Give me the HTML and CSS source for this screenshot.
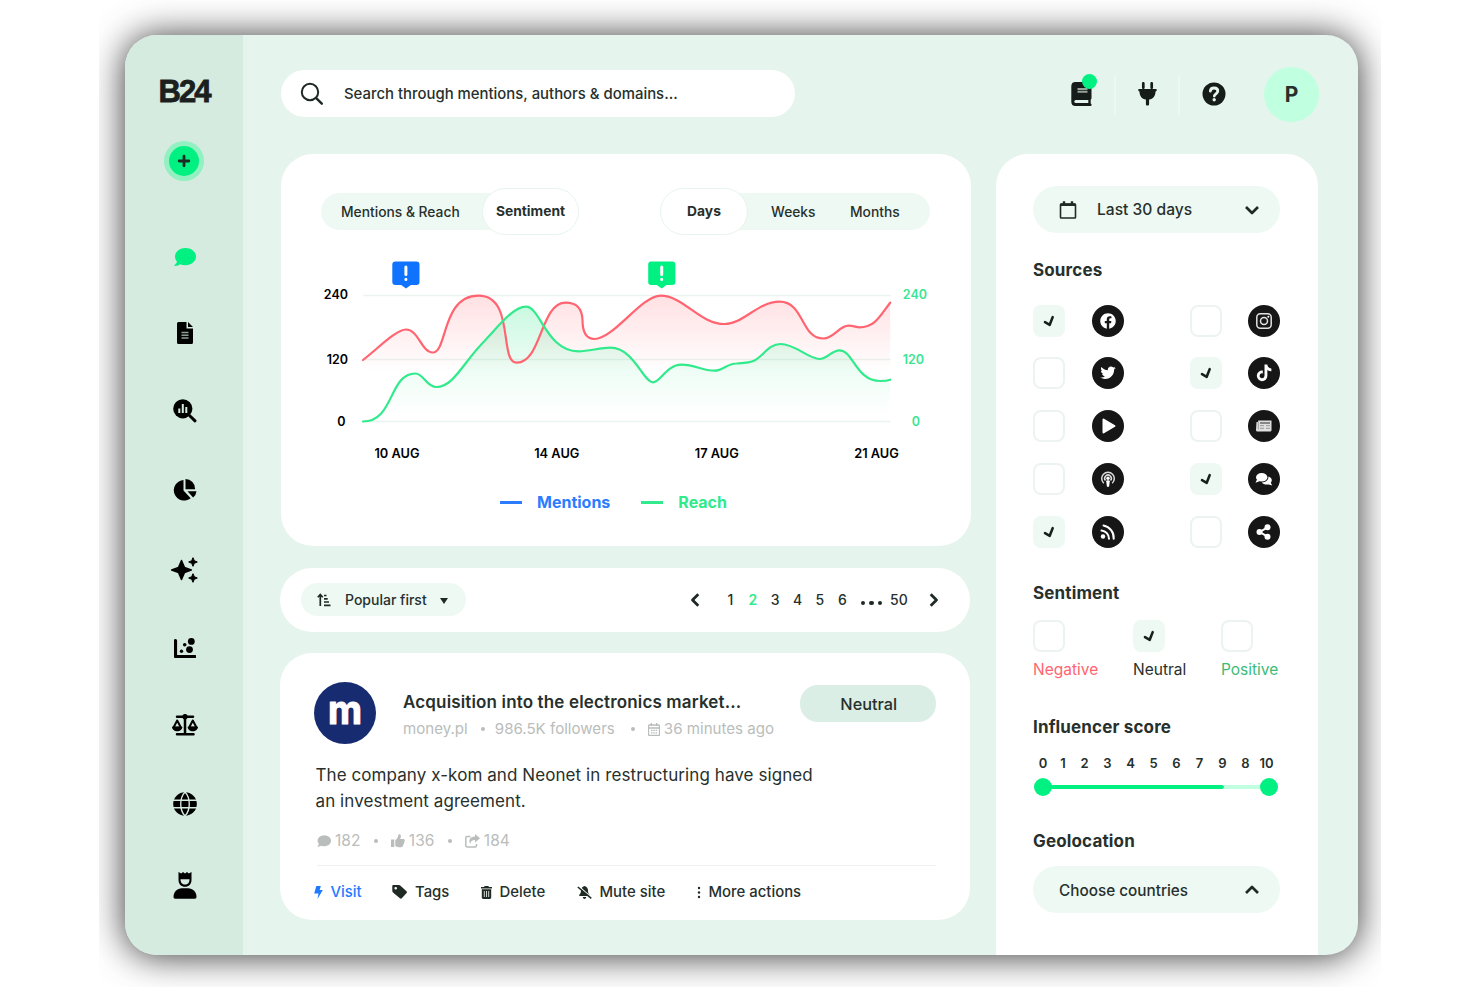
FILE: index.html
```html
<!DOCTYPE html>
<html lang="en">

<head>
  <meta charset="UTF-8">
  <title>B24 | Mentions</title>
  <link rel="stylesheet" href="styles.css">
</head>

<body>
  <!-- shared shapes -->
  <svg class="defs" width="0" height="0">
    <symbol id="check" viewBox="0 0 32 32">
      <path d="M12 17.200l4.700 2.600 3-7.700" fill="none" stroke="#17211c" stroke-width="2.600" stroke-linecap="round" stroke-linejoin="round"/>
    </symbol>
    <symbol id="bubble" viewBox="0 0 22 18">
      <path d="M11.500 0C5.700 0 1 3.800 1 8.600c0 2 .8 3.700 2 5.100-.4 1.300-1.300 2.400-2.400 3.300-.4.400-.2 1 .4 1 2 0 3.800-.8 5-1.700 1.700.7 3.500 1 5.500 1C17.300 17.300 22 13.400 22 8.600S17.300 0 11.500 0z"/>
    </symbol>
  </svg>

  <div class="stage">
    <div class="app">

      <aside class="sidebar">
        <div class="logo">B24</div>
        <button class="add">
          <svg width="14" height="14" viewBox="0 0 14 14"><path d="M7 2.200v9.600M2.200 7h9.600" stroke="#1c2b24" stroke-width="2.800" stroke-linecap="round"/></svg>
        </button>
        <nav class="menu">
          <svg class="active" width="22" height="18"><use href="#bubble"/></svg>
          <svg width="18" height="22" viewBox="0 0 18 22">
            <path d="M2 0h8.500v6.500H17V20.500a1.500 1.500 0 0 1-1.500 1.500h-13A1.500 1.500 0 0 1 1 20.500v-19A1.500 1.500 0 0 1 2.500 0zM12 0l5 5h-5z"/>
            <path d="M5.500 10.500h7M5.500 13.200h7M5.500 16h7" stroke="#8d9d95" stroke-width="1.600"/>
          </svg>
          <svg width="24" height="24" viewBox="0 0 24 24">
            <circle cx="9.800" cy="9.800" r="9.600"/>
            <path d="M16.500 16.500l5.500 5.300" stroke="#000" stroke-width="3" stroke-linecap="round"/>
            <path d="M6.300 9.500v4.500M9.800 5v9M13.300 8v6" stroke="#d5ebdf" stroke-width="2"/>
          </svg>
          <svg width="24" height="22" viewBox="0 0 24 22">
            <path d="M10.500 1v10.600l7.200 7.600A10.300 10.300 0 1 1 10.500 1z"/>
            <path d="M12.500 0a10 10 0 0 1 9.700 10.200h-9.700z"/>
            <path d="M14.500 12.200h9a9 9 0 0 1-3.400 6.300z"/>
          </svg>
          <svg width="28" height="26" viewBox="0 0 28 26">
            <path d="M10.500 3.500l2.900 6.900 6.900 2.600-6.900 2.600-2.900 6.900-2.900-6.900L.7 13l6.900-2.600z" stroke="#000" stroke-width="1.500" stroke-linejoin="round"/>
            <path d="M22 .7l1.300 3 3 1.300-3 1.300-1.300 3-1.300-3-3-1.300 3-1.300zM22 16.700l1.300 3 3 1.300-3 1.300-1.300 3-1.300-3-3-1.300 3-1.300z" stroke="#000" stroke-linejoin="round"/>
          </svg>
          <svg width="22" height="20" viewBox="0 0 22 20">
            <path d="M1.500 2.500v16H21" fill="none" stroke="#000" stroke-width="3.200" stroke-linecap="round" stroke-linejoin="round"/>
            <circle cx="17.300" cy="3.400" r="3.400"/><circle cx="15.500" cy="11.600" r="3.400"/>
            <circle cx="10.700" cy="6.700" r="1.800"/><circle cx="7.500" cy="13.300" r="1.700"/>
          </svg>
          <svg width="26" height="22" viewBox="0 0 26 22">
            <path d="M13 1.500V20M5 2.700h16M5 20.300h16.500" stroke="#000" stroke-width="2.500" stroke-linecap="round"/>
            <circle cx="13" cy="2.700" r="2.600"/>
            <path d="M5.200 6.500l-3.700 7h7.400zM20.800 6.500l-3.700 7h7.400z" fill="none" stroke="#000" stroke-width="2" stroke-linejoin="round"/>
            <path d="M0 12.800h10.400c0 2.700-2.300 4.500-5.200 4.500S0 15.500 0 12.800zM15.600 12.800H26c0 2.700-2.300 4.500-5.200 4.500s-5.200-1.800-5.200-4.500z"/>
          </svg>
          <svg width="24" height="24" viewBox="0 0 24 24">
            <circle cx="12" cy="12" r="11.800"/>
            <path d="M0 8.300h24M0 15.800h24M12 0C6.300 6 6.300 18 12 24M12 0c5.700 6 5.700 18 0 24" fill="none" stroke="#d5ebdf" stroke-width="1.400"/>
          </svg>
          <svg width="24" height="27" viewBox="0 0 24 27">
            <path d="M5.500 0l2.700 1.500L10 0l2 1.500L14 0l1.800 1.500L18.500 0v8c0 4-2.800 6.800-6.500 6.800S5.500 12 5.500 8z"/>
            <path d="M7.500 7.200h9c0 3.300-1.800 5.400-4.500 5.400S7.500 10.500 7.500 7.200z" fill="#d5ebdf"/>
            <path d="M9 16.300h6c5 0 8.500 3.700 8.500 8.500 0 1.300-.6 2-1.700 2H2.200c-1.100 0-1.700-.7-1.700-2 0-4.800 3.500-8.500 8.500-8.500z"/>
          </svg>
        </nav>
      </aside>

      <main class="main">
        <header class="topbar">
          <div class="search">
            <svg width="24" height="24" viewBox="0 0 24 24"><circle cx="10" cy="10" r="8.200" fill="none" stroke="#1f2a25" stroke-width="2"/><path d="M16.200 16.200l5.600 5.400" stroke="#1f2a25" stroke-width="2.500" stroke-linecap="round"/></svg>
            <span>Search through mentions, authors &amp; domains...</span>
          </div>
          <div class="tools">
            <div class="tool book">
              <svg width="22" height="24" viewBox="0 0 22 24">
                <path d="M4.500 0H19a1.500 1.500 0 0 1 1.500 1.500v14.800c0 .6-.3 1-.8 1.200v4c.6.200.9.600.9 1.200 0 .8-.5 1.300-1.300 1.300H4.500A4.300 4.300 0 0 1 .3 19.700V4.300A4.300 4.300 0 0 1 4.500 0z" fill="#151c19"/>
                <path d="M4.800 18h12.500v3H4.800a1.500 1.500 0 0 1 0-3z" fill="#e5f4ed"/>
                <path d="M6.500 7h10M6.500 9.700h10" stroke="#98a29d" stroke-width="2"/>
              </svg>
              <span class="dot"></span>
            </div>
            <span class="divider"></span>
            <svg class="tool" width="19" height="24" viewBox="0 0 19 24">
              <path d="M5.300 1.300v4.500M13.700 1.300v4.500" stroke="#151c19" stroke-width="2.700" stroke-linecap="round"/>
              <path d="M1.500 7h16c.9 0 1.300.5 1.300 1.100s-.4 1.200-1.300 1.300c0 4.500-2.300 7.300-6.400 8.200V22c0 1-.6 1.600-1.600 1.600S7.900 23 7.900 22v-4.400C3.800 16.700 1.500 13.900 1.500 9.400.6 9.300.2 8.800.2 8.100S.6 7 1.500 7z" fill="#151c19"/>
            </svg>
            <span class="divider"></span>
            <svg class="tool" width="24" height="24" viewBox="0 0 24 24">
              <circle cx="12" cy="12" r="11.500" fill="#151c19"/>
              <path d="M8.300 9.200C8.500 7 10 6 12.100 6c2.200 0 3.700 1.200 3.700 3.100 0 2.600-3.500 2.700-3.500 5" fill="none" stroke="#e5f4ed" stroke-width="2.800" stroke-linecap="round"/>
              <circle cx="12.200" cy="17.800" r="1.700" fill="#e5f4ed"/>
            </svg>
            <div class="avatar">P</div>
          </div>
        </header>

        <div class="content">
          <div class="feed">

            <section class="card chart-card">
              <div class="tabs">
                <div class="tab-group reach">
                  <span class="tab">Mentions &amp; Reach</span>
                  <span class="tab selected">Sentiment</span>
                </div>
                <div class="tab-group period">
                  <span class="tab selected">Days</span>
                  <span class="tab">Weeks</span>
                  <span class="tab">Months</span>
                </div>
              </div>

              <svg class="chart" width="690" height="220" viewBox="281.500 250 690 220">
                <defs>
                  <linearGradient id="red" gradientUnits="userSpaceOnUse" x1="0" y1="295" x2="0" y2="372">
                    <stop offset="0" stop-color="#ff6470" stop-opacity=".2"/>
                    <stop offset="1" stop-color="#ff6470" stop-opacity="0"/>
                  </linearGradient>
                  <linearGradient id="green" gradientUnits="userSpaceOnUse" x1="0" y1="300" x2="0" y2="415">
                    <stop offset="0" stop-color="#1ee57f" stop-opacity=".25"/>
                    <stop offset=".55" stop-color="#1ee57f" stop-opacity=".09"/>
                    <stop offset="1" stop-color="#1ee57f" stop-opacity="0"/>
                  </linearGradient>
                </defs>
                <path d="M364 295.500h527M364 359.500h527M364 421.500h527" stroke="#e9f3ef" stroke-width="1.500"/>
                <path fill="url(#red)" d="M363.500 360C380 347 397 329.500 406.500 329.500C419 329.500 422 352.500 433.300 352.500C448 352.500 442 295.700 479 295.700C516 295.700 499 362.700 517.300 362.700C542 362.700 541 302.700 566 302.700C578 302.700 582.500 309 583 320C583 332 587 339 595 339C614 339 642 295.700 661 295.700C684 295.700 700 324 725 324C744 324 758 301.700 780 301.700C805 301.700 801 338.500 824 338.500C834 338.500 840 325.700 849 325.700C855 325.700 856 327.300 860 327.300C876 327.300 881 315 890.700 302.700V375H363.500z"/>
                <path fill="url(#green)" d="M363.500 421.500C395 421.500 389 373.500 416 373.500C424 373.500 427 387 437 387C454 387 464 362 485 341C500 325 514 306.700 526.500 306.700C541 306.700 547 351.300 579 351.300C590 351.300 600 347.700 611 347.700C634 347.700 644 382.300 653.500 382.300C661 382.300 667 364.700 682 364.700C696 364.700 702 370.700 715 370.700C724 370.700 727 363.500 737 363.500C746 363 750 363 755 360.500C764 356 769 344 781 344C796 344 809 359 820 359C828 359 832 350.300 840 350.300C854 350.300 856 381 881 381Q887 381 890.700 379.700V421.500z"/>
                <path class="line red" d="M363.500 360C380 347 397 329.500 406.500 329.500C419 329.500 422 352.500 433.300 352.500C448 352.500 442 295.700 479 295.700C516 295.700 499 362.700 517.300 362.700C542 362.700 541 302.700 566 302.700C578 302.700 582.500 309 583 320C583 332 587 339 595 339C614 339 642 295.700 661 295.700C684 295.700 700 324 725 324C744 324 758 301.700 780 301.700C805 301.700 801 338.500 824 338.500C834 338.500 840 325.700 849 325.700C855 325.700 856 327.300 860 327.300C876 327.300 881 315 890.700 302.700"/>
                <path class="line green" d="M363.500 421.500C395 421.500 389 373.500 416 373.500C424 373.500 427 387 437 387C454 387 464 362 485 341C500 325 514 306.700 526.500 306.700C541 306.700 547 351.300 579 351.300C590 351.300 600 347.700 611 347.700C634 347.700 644 382.300 653.500 382.300C661 382.300 667 364.700 682 364.700C696 364.700 702 370.700 715 370.700C724 370.700 727 363.500 737 363.500C746 363 750 363 755 360.500C764 356 769 344 781 344C796 344 809 359 820 359C828 359 832 350.300 840 350.300C854 350.300 856 381 881 381Q887 381 890.700 379.700"/>

                <g fill="#0f73ff">
                  <rect x="392.800" y="261.500" width="27.200" height="23.500" rx="3"/>
                  <path d="M401 284.500h11l-5.500 4z"/>
                </g>
                <path d="M406.400 267v7.500M406.400 279.300v.2" stroke="#fff" stroke-width="3" stroke-linecap="round"/>
                <g fill="#00f082">
                  <rect x="648.700" y="261.500" width="27.200" height="23.500" rx="3"/>
                  <path d="M656.700 284.500h11l-5.500 4z"/>
                </g>
                <path d="M662.200 267v7.500M662.200 279.300v.2" stroke="#fff" stroke-width="3" stroke-linecap="round"/>

                <g class="axis">
                  <text x="348.500" y="299.300" text-anchor="end">240</text>
                  <text x="348.500" y="363.600" text-anchor="end">120</text>
                  <text x="346" y="425.600" text-anchor="end">0</text>
                </g>
                <g class="axis reach">
                  <text x="903.300" y="299.300">240</text>
                  <text x="903.300" y="363.600">120</text>
                  <text x="912.300" y="425.600">0</text>
                </g>
                <g class="dates" text-anchor="middle">
                  <text x="397.500" y="458.300">10 AUG</text>
                  <text x="557.300" y="458.300">14 AUG</text>
                  <text x="717.300" y="458.300">17 AUG</text>
                  <text x="877" y="458.300">21 AUG</text>
                </g>
              </svg>

              <div class="legend">
                <span class="mentions">Mentions</span>
                <span class="reach">Reach</span>
              </div>
            </section>

            <section class="card sort-bar">
              <div class="sort">
                <svg width="14" height="14" viewBox="0 0 14 14"><path d="M3.300 13V2M.8 4.300L3.300 1.500l2.500 2.800" fill="none" stroke="#1f2a25" stroke-width="1.700"/><path d="M7 2.500h2.500M7 5.800h3.700M7 9h5M7 12.300h6.500" stroke="#1f2a25" stroke-width="1.700"/></svg>
                <span>Popular first</span>
                <svg class="caret" width="10" height="8" viewBox="0 0 10 8"><path d="M1 2h8L5 8z" fill="#1f2a25"/></svg>
              </div>
              <div class="pages">
                <svg width="12" height="16" viewBox="0 0 12 16"><path d="M9.300 2.300L3.500 8l5.800 5.700" fill="none" stroke="#1f2a25" stroke-width="2.800" stroke-linejoin="round"/></svg>
                <div class="numbers">
                  <span>1</span><span class="current">2</span><span>3</span><span>4</span><span>5</span><span>6</span>
                </div>
                <span class="more"><i></i><i></i><i></i></span>
                <span class="last">50</span>
                <svg width="12" height="16" viewBox="0 0 12 16"><path d="M2.700 2.300L8.500 8l-5.800 5.700" fill="none" stroke="#1f2a25" stroke-width="2.800" stroke-linejoin="round"/></svg>
              </div>
            </section>

            <article class="card post">
              <div class="post-head">
                <svg width="62" height="62" viewBox="0 0 62 62">
                  <circle cx="31" cy="31" r="31" fill="#172b70"/>
                  <text class="brand" x="14" y="42.300" textLength="34" lengthAdjust="spacingAndGlyphs">m</text>
                </svg>
                <div class="post-title">
                  <h3>Acquisition into the electronics market...</h3>
                  <div class="meta">
                    <span>money.pl</span>
                    <span>986.5K followers</span>
                    <span>
                      <svg width="12" height="13" viewBox="0 0 12 13"><path d="M1.500 2h9a1 1 0 0 1 1 1v8.500a1 1 0 0 1-1 1h-9a1 1 0 0 1-1-1V3a1 1 0 0 1 1-1zM3.300 0v3M8.700 0v3M.5 5h11" fill="none" stroke="#b9bdbb" stroke-width="1.300"/><path d="M3 7.300h6M3 9.800h6" stroke="#b9bdbb" stroke-width="1.300" stroke-dasharray="1.500 .75"/></svg>
                      36 minutes ago
                    </span>
                  </div>
                </div>
                <span class="badge">Neutral</span>
              </div>
              <p>The company x-kom and Neonet in restructuring have signed<br>an investment agreement.</p>
              <div class="stats">
                <span><svg width="14" height="12" viewBox="0 0 22 18"><use href="#bubble"/></svg>182</span>
                <span><svg width="14" height="14" viewBox="0 0 14 14"><path d="M0 5.500h3.300V13H0zM4.300 6C6 5 7 3.300 7.200 1.500 7.300.6 7.800.3 8.300.3c1.200 0 1.700 1 1.600 2.200-.1.900-.4 1.700-.8 2.400h3c1.100 0 1.700.7 1.700 1.500 0 .6-.2 1-.6 1.300.3.900.1 1.500-.5 1.900.2.800-.1 1.400-.7 1.700 0 1.200-.7 2-2 2H8c-1.500 0-2.300-.5-3.700-1.200z"/></svg>136</span>
                <span><svg width="15" height="14" viewBox="0 0 15 14"><path d="M5.500 2.500H2a1.200 1.200 0 0 0-1.200 1.200v8A1.200 1.200 0 0 0 2 12.900h8.300a1.200 1.200 0 0 0 1.200-1.200V10" fill="none" stroke="#b9bdbb" stroke-width="1.500"/><path d="M10 0l5 4.300-5 4.300V6C7.500 6 6 6.700 5.200 10 3.300 6 5 2.700 10 2.600z"/></svg>184</span>
              </div>
              <div class="actions">
                <span class="visit"><svg width="9" height="13" viewBox="0 0 9 13"><path d="M2.300 0h4.500L5.700 4h3.100L3.500 13l1-5.500H.2z"/></svg>Visit</span>
                <span><svg width="16" height="14" viewBox="0 0 16 14"><path fill-rule="evenodd" d="M1.300 0H7c.5 0 .9.200 1.200.5l6.300 5.700c.6.600.6 1.300.1 1.900l-4.800 5.200c-.6.600-1.300.6-1.900 0L1 7.500C.6 7.100.3 6.600.3 6V1.100C.3.400.7 0 1.300 0zm2.400 2a1.300 1.300 0 1 0 0 2.600 1.300 1.300 0 0 0 0-2.600z"/></svg>Tags</span>
                <span><svg width="11" height="13" viewBox="0 0 11 13"><path d="M0 1h3l.7-1h3.600L8 1h3v1.500H0zM.8 3.200h9.400V11.500c0 .9-.5 1.400-1.400 1.400H2.200c-.9 0-1.400-.5-1.400-1.400z"/><path d="M3.300 5v6M5.500 5v6M7.700 5v6" stroke="#fff" stroke-width=".8"/></svg>Delete</span>
                <span><svg width="15" height="13" viewBox="0 0 15 13"><path d="M7.500 0c2.500.6 3.500 2.300 3.500 4.500 0 2.500.8 3.600 2 4.800l-.6.700H2.500C2 9.500 2 9 2.500 8.500 3.500 7.500 4 6 4 4.500 4 2.300 5 .6 7.500 0zM5.800 11h3.400c0 1.100-.7 1.900-1.700 1.900S5.800 12.100 5.800 11z"/><path d="M2 .5l12.500 11" stroke="#fff" stroke-width="1.200"/><path d="M.8 1l13.500 11.300" stroke="#1f2a25" stroke-width="1.500"/></svg>Mute site</span>
                <span><svg width="4" height="13" viewBox="0 0 4 13"><circle cx="2" cy="2" r="1.200"/><circle cx="2" cy="6.500" r="1.200"/><circle cx="2" cy="11" r="1.200"/></svg>More actions</span>
              </div>
            </article>
          </div>

          <aside class="filters">
            <div class="select">
              <svg width="18" height="20" viewBox="0 0 18 20"><path d="M2.300 4h13.400c.4 0 .8.300.8.800v12.400c0 .4-.3.800-.8.800H2.300c-.4 0-.8-.3-.8-.8V4.800c0-.4.300-.8.800-.8z" fill="none" stroke="#1f2a25" stroke-width="1.600"/><path d="M1.500 4.700h15M5 1.200v3M13 1.200v3" stroke="#1f2a25" stroke-width="2.400"/></svg>
              <span class="value">Last 30 days</span>
              <svg class="chevron" width="16" height="10" viewBox="0 0 16 10"><path d="M2 2l6 6 6-6" fill="none" stroke="#1f2a25" stroke-width="2.700" stroke-linejoin="round"/></svg>
            </div>

            <h2>Sources</h2>
            <div class="sources">
              <span class="box checked"><svg width="32" height="32"><use href="#check"/></svg></span>
              <svg width="32" height="32" viewBox="0 0 32 32"><circle cx="16" cy="16" r="16"/><path transform="translate(8 8) scale(.03125)" fill="#fff" d="M504 256C504 119 393 8 256 8S8 119 8 256c0 123.780 90.690 226.380 209.250 245V327.690h-63V256h63v-54.640c0-62.150 37-96.480 93.670-96.480 27.140 0 55.520 4.840 55.520 4.840v61h-31.280c-30.800 0-40.410 19.120-40.410 38.730V256h68.780l-11 71.690h-57.780V501C413.310 482.380 504 379.780 504 256z"/></svg>
              <span class="box"></span>
              <svg width="32" height="32" viewBox="0 0 32 32"><circle cx="16" cy="16" r="16"/><g fill="none" stroke="#e2e2e2" stroke-width="1.500"><rect x="8.800" y="8.800" width="14.400" height="14.400" rx="3.500"/><circle cx="16" cy="16" r="3.500"/></g><circle cx="20.300" cy="11.700" r="1" fill="#fff"/></svg>

              <span class="box"></span>
              <svg width="32" height="32" viewBox="0 0 32 32"><circle cx="16" cy="16" r="16"/><path transform="translate(8.300 8) scale(.03)" fill="#fff" d="M459.370 151.716c.325 4.548.325 9.097.325 13.645 0 138.720-105.583 298.558-298.558 298.558-59.452 0-114.680-17.219-161.137-47.106 8.447.974 16.568 1.299 25.340 1.299 49.055 0 94.213-16.568 130.274-44.832-46.132-.975-84.792-31.188-98.112-72.772 6.498.974 12.995 1.624 19.818 1.624 9.421 0 18.843-1.300 27.614-3.573-48.081-9.747-84.143-51.980-84.143-102.985v-1.299c13.969 7.797 30.214 12.670 47.431 13.319-28.264-18.843-46.781-51.005-46.781-87.391 0-19.492 5.197-37.360 14.294-52.954 51.655 63.675 129.300 105.258 216.365 109.807-1.624-7.797-2.599-15.918-2.599-24.040 0-57.828 46.782-104.934 104.934-104.934 30.213 0 57.502 12.670 76.670 33.137 23.715-4.548 46.456-13.320 66.599-25.340-7.798 24.366-24.366 44.833-46.132 57.827 21.117-2.273 41.584-8.122 60.426-16.243-14.292 20.791-32.161 39.308-52.628 54.253z"/></svg>
              <span class="box checked"><svg width="32" height="32"><use href="#check"/></svg></span>
              <svg width="32" height="32" viewBox="0 0 32 32"><circle cx="16" cy="16" r="16"/><path transform="translate(8.800 7.500) scale(.0325)" fill="#fff" d="M448 209.910a210.060 210.060 0 0 1-122.770-39.250V349.380A162.550 162.550 0 1 1 185 188.310V278.200a74.620 74.620 0 1 0 52.230 71.180V0h88a121.180 121.180 0 0 0 1.860 22.170A122.180 122.180 0 0 0 381 102.390a121.430 121.430 0 0 0 67 20.140z"/></svg>

              <span class="box"></span>
              <svg width="32" height="32" viewBox="0 0 32 32"><circle cx="16" cy="16" r="16"/><path d="M11.500 9.500v13L22.500 16z" fill="#fff" stroke="#fff" stroke-width="2" stroke-linejoin="round"/></svg>
              <span class="box"></span>
              <svg width="32" height="32" viewBox="0 0 32 32"><circle cx="16" cy="16" r="16"/><path d="M8.500 12h1.700v-1.500h13.300v9.500a1.500 1.500 0 0 1-1.500 1.500H9.500A1.500 1.500 0 0 1 8 20z" fill="#e0e0e0"/><path d="M12 13h10" stroke="#555" stroke-width="1.300"/><path d="M10.300 12v7.500M12 15.700h4M18 15.700h4M12 18.300h4M18 18.300h4" stroke="#999" stroke-width="1"/></svg>

              <span class="box"></span>
              <svg width="32" height="32" viewBox="0 0 32 32"><circle cx="16" cy="16" r="16"/><g fill="none" stroke="#ddd" stroke-width="1.500"><path d="M11.800 20.300a6.300 6.300 0 1 1 8.400 0"/><path d="M13.500 17.500a3.300 3.300 0 1 1 5 0"/></g><circle cx="16" cy="15.200" r="1.700" fill="#fff"/><path d="M14.200 18.200c0-1.200 3.600-1.200 3.600 0L17.200 23c-.2 1.200-2.200 1.200-2.400 0z" fill="#fff"/></svg>
              <span class="box checked"><svg width="32" height="32"><use href="#check"/></svg></span>
              <svg width="32" height="32" viewBox="0 0 32 32"><circle cx="16" cy="16" r="16"/><ellipse cx="13.700" cy="14.300" rx="5.700" ry="4.300" fill="#fff"/><path d="M9.200 16l-1.700 3.700 4-1.500z" fill="#fff"/><path d="M20.500 13.500c2.200.7 3.300 2 3.300 3.700 0 1-.4 1.800-1 2.500l1.400 2.800-3.400-1.100c-3 .6-5.700-.2-6.900-2 3.800 0 6.600-2.300 6.600-5.900z" fill="#fff"/></svg>

              <span class="box checked"><svg width="32" height="32"><use href="#check"/></svg></span>
              <svg width="32" height="32" viewBox="0 0 32 32"><circle cx="16" cy="16" r="16"/><circle cx="11" cy="20.500" r="2.200" fill="#fff"/><path d="M9.500 14.500a8.200 8.200 0 0 1 7.500 8.200M11.500 9.500a12.500 12.500 0 0 1 10.200 13.200" fill="none" stroke="#fff" stroke-width="2" stroke-linecap="round"/></svg>
              <span class="box"></span>
              <svg width="32" height="32" viewBox="0 0 32 32"><circle cx="16" cy="16" r="16"/><path d="M19.500 11.300L11.800 16l7.700 4.700" fill="none" stroke="#fff" stroke-width="2"/><circle cx="11.500" cy="16" r="3" fill="#fff"/><circle cx="19.500" cy="11.300" r="3" fill="#fff"/><circle cx="19.500" cy="20.700" r="3" fill="#fff"/></svg>
            </div>

            <h2 class="h-sentiment">Sentiment</h2>
            <div class="sentiments">
              <div class="negative"><span class="box"></span>Negative</div>
              <div><span class="box checked"><svg width="32" height="32"><use href="#check"/></svg></span>Neutral</div>
              <div class="positive"><span class="box"></span>Positive</div>
            </div>

            <h2 class="h-score">Influencer score</h2>
            <div class="scale">
              <span>0</span><span>1</span><span>2</span><span>3</span><span>4</span><span>5</span><span>6</span><span>7</span><span>9</span><span>8</span><span>10</span>
            </div>
            <div class="slider">
              <span class="knob"></span>
              <span class="fill"></span>
              <span class="rest"></span>
              <span class="knob"></span>
            </div>

            <h2 class="h-geo">Geolocation</h2>
            <div class="select geo">
              <span class="value">Choose countries</span>
              <svg class="chevron" width="16" height="10" viewBox="0 0 16 10"><path d="M2 8l6-6 6 6" fill="none" stroke="#1f2a25" stroke-width="2.700" stroke-linejoin="round"/></svg>
            </div>
          </aside>
        </div>
      </main>
    </div>
  </div>
</body>

</html>
```

FILE: styles.css
```css
* {
  box-sizing: border-box;
}

body {
  margin: 0;
  background: #fff;
  font-family: Inter, "Liberation Sans", sans-serif;
  color: #27302c;
  overflow: hidden;
}

svg {
  flex: none;
  display: block;
}

.defs {
  display: none;
}

/* Clips the window shadow left and right */
.stage {
  width: 1282px;
  height: 987px;
  margin-left: 99px;
  padding: 35px 0 0 26px;
  overflow: hidden;
}

.app {
  display: flex;
  width: 1233px;
  height: 919.5px;
  border-radius: 32px;
  background: #e5f4ed;
  box-shadow: 0 1px 36px rgba(0, 0, 0, 0.8);
  overflow: hidden;
}

/* Sidebar */
.sidebar {
  display: flex;
  flex-direction: column;
  align-items: center;
  width: 118px;
  padding-top: 37px;
  background: #d5ebdf;
}

.logo {
  height: 40px;
  line-height: 40px;
  font-family: "Liberation Sans", sans-serif;
  font-weight: bold;
  font-size: 31px;
  letter-spacing: -2px;
  color: #1b1f1d;
  -webkit-text-stroke: 0.8px #1b1f1d;
}

.add {
  display: flex;
  align-items: center;
  justify-content: center;
  width: 30px;
  height: 30px;
  margin-top: 33.5px;
  padding: 0;
  border: none;
  border-radius: 50%;
  background: #00f082;
  box-shadow: 0 0 0 5px #92f0c1;
}

.menu {
  display: flex;
  flex-direction: column;
  align-items: center;
  gap: 55.7px;
  margin: 72.5px 0 0 2px;
}

.menu .active {
  fill: #00f082;
}

/* Main column */
.main {
  display: flex;
  flex-direction: column;
  flex: 1;
  padding: 32px 40px 0 38px;
}

.topbar {
  display: flex;
  align-items: center;
  justify-content: space-between;
  height: 55px;
  margin-right: -1px;
}

.search {
  display: flex;
  align-items: center;
  gap: 20px;
  width: 514px;
  height: 47px;
  margin-top: -2px;
  padding-left: 19px;
  border-radius: 24px;
  background: #fff;
  font-size: 14.9px;
  font-weight: 500;
}

.tools {
  display: flex;
  align-items: center;
}

.tool {
  margin-top: -1px;
}

.book {
  position: relative;
}

.book .dot {
  position: absolute;
  top: -8px;
  right: -4px;
  width: 15px;
  height: 15px;
  border-radius: 50%;
  background: #00f082;
}

.divider {
  width: 2px;
  height: 40px;
  margin: 0 22.5px 0 20.3px;
  background: #eef8f3;
}

.avatar {
  width: 55px;
  height: 55px;
  margin-left: 38px;
  border-radius: 50%;
  background: #c0ffe0;
  font-size: 21px;
  font-weight: 700;
  line-height: 55px;
  text-align: center;
}

.content {
  display: flex;
  flex: 1;
  gap: 25px;
  margin-top: 31.5px;
}

.feed {
  width: 690px;
}

.card {
  background: #fff;
  border-radius: 32px;
}

/* Chart */
.chart-card {
  height: 392.5px;
  padding-top: 34px;
}

.tabs {
  display: flex;
  justify-content: space-between;
  height: 48px;
  padding: 0 41px 0 40px;
  align-items: center;
}

.tab-group {
  display: flex;
  align-items: center;
  height: 37px;
  border-radius: 19px;
  background: #eef9f4;
  font-size: 13.8px;
  font-weight: 500;
}

.tab.selected {
  height: 47px;
  line-height: 45px;
  border: 1.5px solid #e6f4ee;
  border-radius: 24px;
  background: #fff;
  text-align: center;
  font-weight: 700;
}

.reach .tab:first-child {
  width: 161px;
  padding-left: 20px;
}

.reach .selected {
  width: 97px;
}

.period .selected {
  width: 88px;
  margin-right: 23px;
}

.period .tab:nth-child(2) {
  width: 79px;
}

.period .tab:last-child {
  width: 80px;
}

.chart {
  margin-top: 14px;
}

.line {
  fill: none;
  stroke-width: 2.2;
  stroke-linecap: round;
}

.line.red {
  stroke: #ff6470;
}

.line.green {
  stroke: #30ea8c;
}

.axis,
.dates {
  font-size: 12.5px;
  font-weight: 600;
}

.dates {
  font-size: 12.8px;
}

.axis.reach {
  fill: #3be592;
}

.legend {
  display: flex;
  gap: 31px;
  margin-top: 20px;
  padding-left: 219px;
  font-size: 16px;
  font-weight: 700;
  line-height: 24px;
}

.legend span {
  display: flex;
  align-items: center;
  gap: 15px;
}

.legend span::before {
  content: "";
  width: 22px;
  height: 2.5px;
  margin-top: 2px;
  background: currentColor;
}

.legend .mentions {
  color: #2b7cff;
}

.legend .reach {
  color: #30ea8c;
}

/* Sorting and pages */
.sort-bar {
  display: flex;
  align-items: center;
  justify-content: space-between;
  height: 64px;
  margin: 21.5px 1px 0 -1px;
  padding: 0 30px 0 21px;
  font-size: 14px;
  font-weight: 500;
}

.sort {
  display: flex;
  align-items: center;
  width: 165px;
  height: 33px;
  padding-left: 16px;
  border-radius: 17px;
  background: #eef9f4;
}

.sort span {
  width: 81px;
  margin: 0 13px 0 14px;
  white-space: nowrap;
}

.pages {
  display: flex;
  align-items: center;
}

.numbers {
  display: flex;
  margin-left: 18px;
}

.numbers span {
  width: 22.4px;
  text-align: center;
}

.numbers .current {
  color: #30ea8c;
  font-weight: 600;
}

.more {
  display: flex;
  gap: 4px;
  margin: 7px 8px 0 7px;
}

.more i {
  width: 4.5px;
  height: 4.5px;
  border-radius: 50%;
  background: #1f2a25;
}

.last {
  width: 18px;
  margin-right: 20px;
}

/* Post */
.post {
  height: 267px;
  margin: 21.5px 1px 0 -1px;
  padding: 29px 34.5px 0 34px;
}

.post-head {
  display: flex;
}

.brand {
  fill: #fff;
  stroke: #fff;
  stroke-width: 1.2;
  stroke-linejoin: round;
  font-size: 40px;
  font-weight: 700;
}

.post-title {
  flex: 1;
  padding-left: 27px;
}

h3 {
  margin: 8px 0 0;
  font-size: 17px;
  font-weight: 600;
  letter-spacing: 0.15px;
  line-height: 24px;
}

.meta {
  display: flex;
  margin-top: 3px;
  font-size: 15.1px;
  line-height: 24px;
  color: #b9bdbb;
  white-space: nowrap;
}

.meta span,
.stats span {
  display: flex;
  align-items: center;
  gap: 4px;
}

.meta span + span::before,
.stats span + span::before {
  content: "";
  width: 4px;
  height: 4px;
  border-radius: 50%;
  background: #b9bdbb;
}

.meta span + span::before {
  margin: 0 6px 0 13px;
}

.meta span:last-child::before {
  margin: 0 9px 0 16px;
}

.badge {
  width: 135.5px;
  height: 36.5px;
  margin-top: 3px;
  border-radius: 18px;
  background: #dbeee5;
  font-size: 16.3px;
  font-weight: 500;
  line-height: 38px;
  text-align: center;
  text-indent: 2px;
}

.post p {
  margin: 18px 0 0 1.5px;
  font-size: 17px;
  letter-spacing: 0.08px;
  line-height: 26px;
  white-space: nowrap;
}

.stats {
  display: flex;
  height: 24px;
  margin: 14.5px 0 0 3px;
  font-size: 15.5px;
  color: #b9bdbb;
  fill: #b9bdbb;
}

.stats span + span::before {
  margin: 0 8.5px 0 14px;
}

.actions {
  display: grid;
  grid-template-columns: 77.5px 89.5px 96px 120px auto;
  margin: 12.5px 0 0 3px;
  padding-top: 14px;
  border-top: 1.5px solid #edf1ef;
  font-size: 14.9px;
  font-weight: 500;
  line-height: 24px;
  fill: #1f2a25;
}

.actions span {
  display: flex;
  align-items: center;
  gap: 7.5px;
  margin-left: -3px;
}

.actions .visit {
  color: #1f7aff;
  fill: #1f7aff;
}

/* Filters */
.filters {
  width: 322px;
  padding: 32px 38px 0 37px;
  border-radius: 32px 32px 0 0;
  background: #fff;
}

.select {
  display: flex;
  align-items: center;
  height: 47.5px;
  padding: 1px 20px 0 26px;
  border-radius: 24px;
  background: #eef9f4;
  font-size: 15.6px;
  font-weight: 500;
}

.select .value {
  padding-left: 20px;
}

.select.geo .value {
  padding-left: 0;
  font-size: 15.3px;
}

.chevron {
  margin-left: auto;
}

h2 {
  margin: 25px 0 0;
  font-size: 17px;
  font-weight: 700;
  letter-spacing: 0.15px;
  line-height: 24px;
}

h2.h-sentiment {
  margin-top: 33.8px;
}

h2.h-score {
  margin-top: 35px;
}

h2.h-geo {
  margin-top: 33px;
}

.sources {
  display: grid;
  grid-template-columns: 58.5px 98px 58.5px 32px;
  grid-auto-rows: 32px;
  row-gap: 20.8px;
  margin-top: 22.5px;
  fill: #161616;
}

.box {
  display: block;
  width: 32px;
  height: 32px;
  border: 2px solid #ecf3f0;
  border-radius: 8px;
}

.box.checked {
  border: none;
  background: #eef9f4;
}

.sentiments {
  display: grid;
  grid-template-columns: 100px 88px auto;
  margin-top: 15px;
  font-size: 15.5px;
  line-height: 20px;
}

.sentiments .box {
  margin-bottom: 7.5px;
}

.negative {
  color: #ff6470;
}

.positive {
  color: #3dbb77;
}

.scale {
  display: grid;
  grid-template-columns: 20px 20px repeat(8, 23px) 19px;
  margin-top: 16.5px;
  font-size: 13px;
  font-weight: 600;
  line-height: 16px;
  text-align: center;
}

.slider {
  display: flex;
  align-items: center;
  width: 244px;
  margin: 6.5px 0 0 1px;
}

.knob {
  width: 18px;
  height: 18px;
  border-radius: 50%;
  background: #00f082;
}

.fill {
  width: 173px;
  height: 4px;
  margin-left: -1px;
  border-radius: 0 2px 2px 0;
  background: #00f082;
}

.rest {
  flex: 1;
  height: 4px;
  background: #c0ffe0;
}

.select.geo {
  margin-top: 13px;
}
```
